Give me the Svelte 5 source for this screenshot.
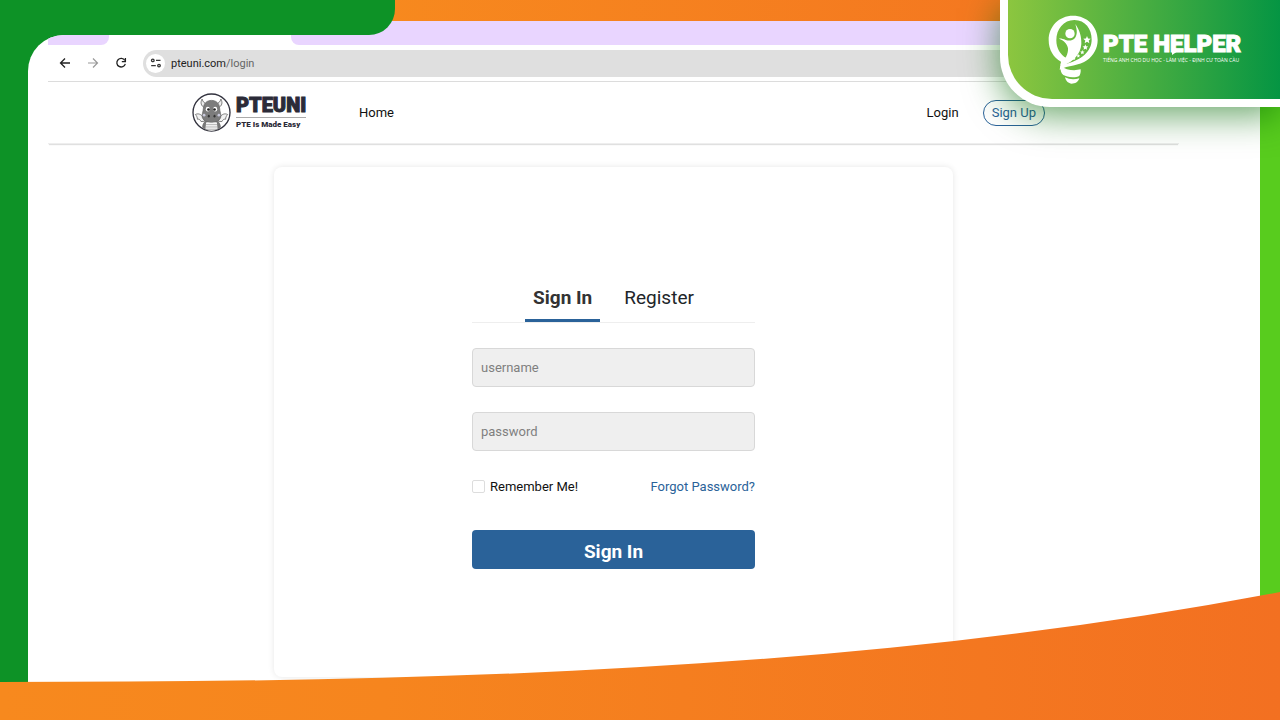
<script lang="ts">
	let username = $state('');
	let password = $state('');
	let remember = $state(false);
	let activeTab = $state('signin');

	const tabs = [
		{ id: 'signin', label: 'Sign In' },
		{ id: 'register', label: 'Register' }
	];

	const stars = [
		{ x: 142, y: 103, r: 12 },
		{ x: 137, y: 125, r: 9 },
		{ x: 128, y: 140, r: 7 },
		{ x: 116, y: 151, r: 6 },
		{ x: 103, y: 159, r: 5 }
	];

	function starPoints(cx: number, cy: number, r: number) {
		const points: string[] = [];
		for (let i = 0; i < 10; i++) {
			const radius = i % 2 === 0 ? r : r * 0.45;
			const angle = (Math.PI / 5) * i - Math.PI / 2;
			points.push(`${cx + radius * Math.cos(angle)},${cy + radius * Math.sin(angle)}`);
		}
		return points.join(' ');
	}
</script>

<div class="poster">
	<div class="top-band">
		<div class="cap"></div>
	</div>

	<div class="window">
		<div class="tab-strip">
			<div class="tab-left"></div>
			<div class="tab-right"></div>
		</div>

		<div class="toolbar">
			<button class="tool" aria-label="Back">
				<svg viewBox="0 0 12 12" width="12" height="12">
					<path d="M11 6H2M6 1.5L1.5 6L6 10.5" fill="none" stroke="#222" stroke-width="1.3" />
				</svg>
			</button>
			<button class="tool" aria-label="Forward">
				<svg viewBox="0 0 12 12" width="12" height="12">
					<path d="M1 6h9M6 1.5L10.5 6L6 10.5" fill="none" stroke="#999" stroke-width="1.2" />
				</svg>
			</button>
			<button class="tool" aria-label="Reload">
				<svg viewBox="0 0 12 12" width="12" height="12">
					<path d="M9.8 3.4A4.3 4.3 0 1 0 10.3 6.8" fill="none" stroke="#222" stroke-width="1.3" />
					<path d="M10.4 1v3.6H6.8" fill="none" stroke="#222" stroke-width="1.3" />
				</svg>
			</button>
			<div class="address">
				<span class="site-info">
					<svg viewBox="0 0 12 12" width="12" height="12" fill="none" stroke="#333" stroke-width="1.3">
						<circle cx="2.8" cy="3.4" r="1.3" />
						<path d="M6 3.4h4.5M1.2 8.6h4.6" />
						<circle cx="9" cy="8.6" r="1.3" />
					</svg>
				</span>
				<span class="url">pteuni.com<span class="path">/login</span></span>
			</div>
		</div>

		<header class="site-nav">
			<a href="#home" class="brand">
				<svg class="mascot" viewBox="0 0 116 116" width="39" height="39">
					<circle cx="58" cy="58" r="55" fill="#fff" stroke="#33333f" stroke-width="4" />
					<g stroke="#666" stroke-width="2.5">
						<path d="M33 72C26 62 18 60 10 64C14 68 16 73 16 78C21 77 25 80 27 85L38 84Z" fill="#f2f2f2" />
						<path d="M83 72C90 62 98 60 106 64C102 68 100 73 100 78C95 77 91 80 89 85L78 84Z" fill="#f2f2f2" />
						<path d="M30 18C24 29 27 38 37 44L44 32C37 31 32 26 30 18Z" fill="#eee" />
						<path d="M86 18C92 29 89 38 79 44L72 32C79 31 84 26 86 18Z" fill="#eee" />
					</g>
					<path d="M30 102C31 86 42 78 58 78S85 86 86 102C78 109 69 113 58 113S38 109 30 102Z" fill="#777" />
					<path d="M42 88Q58 82 74 88L76 106Q58 118 40 106Z" fill="#f4f4f4" />
					<path d="M41 94h34M40 101h36M42 108h32" stroke="#999" stroke-width="2" />
					<path
						d="M58 22C45 22 35 30 34 44C33 50 33 55 31 61C26 77 39 87 58 87S90 77 85 61C83 55 83 50 82 44C81 30 71 22 58 22Z"
						fill="#7c7c7c"
						stroke="#666"
						stroke-width="2"
					/>
					<ellipse cx="47" cy="48" rx="6" ry="7" fill="#fff" />
					<ellipse cx="69" cy="48" rx="6" ry="7" fill="#fff" />
					<circle cx="49" cy="49" r="4" fill="#222" />
					<circle cx="67" cy="49" r="4" fill="#222" />
					<circle cx="36" cy="66" r="4" fill="#c9c9dc" />
					<circle cx="80" cy="66" r="4" fill="#c9c9dc" />
					<ellipse cx="50" cy="69" rx="3" ry="4" fill="#333" />
					<ellipse cx="67" cy="69" rx="3" ry="4" fill="#333" />
				</svg>
				<span class="brand-text">
					<span class="brand-name">PTEUNI</span>
					<span class="brand-tag">PTE Is Made Easy</span>
				</span>
			</a>
			<nav class="links" aria-label="Main">
				<a href="#home">Home</a>
			</nav>
			<div class="account">
				<a href="#login">Login</a>
				<a href="#signup" class="signup">Sign Up</a>
			</div>
		</header>

		<main class="card">
			<form class="login" onsubmit={(e) => e.preventDefault()}>
				<div class="tabs" role="tablist">
					{#each tabs as tab}
						<button
							type="button"
							role="tab"
							class="tab"
							class:active={activeTab === tab.id}
							aria-selected={activeTab === tab.id}
							onclick={() => (activeTab = tab.id)}
						>
							{tab.label}
						</button>
					{/each}
				</div>
				<input class="field" type="text" placeholder="username" aria-label="username" bind:value={username} />
				<input class="field" type="password" placeholder="password" aria-label="password" bind:value={password} />
				<div class="options">
					<label class="remember">
						<input type="checkbox" bind:checked={remember} />
						Remember Me!
					</label>
					<a href="#forgot">Forgot Password?</a>
				</div>
				<button type="submit" class="submit">Sign In</button>
			</form>
		</main>
	</div>

	<svg class="wave" viewBox="0 0 1280 128" preserveAspectRatio="none" aria-hidden="true">
		<defs>
			<linearGradient id="wave-fill">
				<stop offset="0" stop-color="#f7891e" />
				<stop offset="0.3" stop-color="#f6851e" />
				<stop offset="1" stop-color="#f37021" />
			</linearGradient>
		</defs>
		<path d="M0 90C430 90 860 80 1280 0V128H0Z" fill="url(#wave-fill)" />
	</svg>

	<div class="badge">
		<div class="badge-inner">
			<svg class="bulb" viewBox="25 28 150 207" width="50" height="69" fill="#fff">
				<path
					fill-rule="evenodd"
					d="M100 30C58 30 27 62 27 103C27 133 42 156 64 168L60 192C85 178 118 182 143 163C162 149 174 128 174 103C174 62 142 30 100 30ZM104 43C137 43 156 70 156 102C156 136 126 165 72 176C78 168 81 163 80 157C62 148 50 128 50 104C50 70 72 43 104 43Z"
				/>
				<circle cx="91" cy="84" r="14" />
				<path
					d="M107 55C113 75 113 87 106 97C98 106 87 106 78 103C70 100 64 98 58 99C72 104 83 114 85 128C86 145 78 160 64 172C61 180 64 182 72 179C100 168 123 146 125 115C126 92 119 72 107 55Z"
				/>
				{#each stars as star}
					<polygon points={starPoints(star.x, star.y, star.r)} />
				{/each}
				<path d="M62 180C80 194 104 196 123 191V198C122 206 120 212 113 213C96 217 80 213 71 208C64 203 62 194 62 180Z" />
				<path d="M76 215C90 222 104 222 119 218C115 230 106 234 96 234C87 233 79 228 76 215Z" />
			</svg>
			<div class="badge-text">
				<strong>PTE H<span class="bubble">E</span>LPER</strong>
				<small>TIẾNG ANH CHO DU HỌC - LÀM VIỆC - ĐỊNH CƯ TOÀN CẦU</small>
			</div>
		</div>
	</div>
</div>

<style>
	:global(body) {
		margin: 0;
	}

	.poster {
		position: relative;
		min-height: 100vh;
		overflow: hidden;
		background: linear-gradient(to right, #0d9226 50%, #58cc1e 50%);
		font-family: Roboto, sans-serif;
		font-size: 13px;
		color: #111;
	}

	a {
		color: inherit;
		text-decoration: none;
	}

	button {
		font-family: inherit;
		border: 0;
		padding: 0;
		background: none;
		cursor: pointer;
	}

	.top-band {
		height: 35px;
		background:
			linear-gradient(#e9d5ff, #e9d5ff) 0 21px no-repeat,
			linear-gradient(to right, #f7891e 30%, #f37021);
	}

	.cap {
		width: 395px;
		height: 35px;
		background: #0d9226;
		border-bottom-right-radius: 26px;
	}

	.window {
		margin: 0 20px 0 28px;
		padding: 0 81px 43px 20px;
		background: #fff;
		border-top-left-radius: 36px;
		overflow: hidden;
	}

	.tab-strip {
		display: flex;
		gap: 182px;
		height: 10px;
	}

	.tab-left {
		width: 61px;
		background: #e9d5ff;
		border-bottom-right-radius: 8px;
	}

	.tab-right {
		flex: 1;
		background: #e9d5ff;
		border-bottom-left-radius: 8px;
	}

	.toolbar {
		display: flex;
		align-items: center;
		gap: 16px;
		height: 36px;
		padding-left: 11px;
		border-bottom: 1px solid #dcdcdc;
	}

	.tool {
		display: flex;
		width: 12px;
	}

	.address {
		flex: 1;
		display: flex;
		align-items: center;
		gap: 6px;
		height: 27px;
		padding-left: 3px;
		border-radius: 14px;
		background: #dfdfdf;
		font-size: 11px;
		color: #222;
	}

	.site-info {
		display: flex;
		align-items: center;
		justify-content: center;
		width: 19px;
		height: 19px;
		border-radius: 50%;
		background: #fff;
	}

	.path {
		color: #666;
	}

	.site-nav {
		display: flex;
		align-items: center;
		height: 61px;
		padding: 0 134px 0 144px;
		border-bottom: 1px solid #eee;
		box-shadow: 0 2px 1px -1px rgba(0, 0, 0, 0.12);
	}

	.brand {
		display: flex;
		align-items: center;
		gap: 5px;
		width: 167px;
		color: #2b2b38;
	}

	.brand-text {
		display: flex;
		flex-direction: column;
		font-weight: 900;
		white-space: nowrap;
	}

	.brand-name {
		font-size: 20px;
		line-height: 24px;
		border-bottom: 1px solid #aaa;
		-webkit-text-stroke: 1px #2b2b38;
	}

	.brand-tag {
		font-size: 8px;
		line-height: 14px;
	}

	.account {
		display: flex;
		align-items: center;
		gap: 24px;
		margin-left: auto;
	}

	.signup {
		padding: 0 8px;
		border: 1px solid #2a6299;
		border-radius: 13px;
		line-height: 24px;
		color: #2a6299;
	}

	.card {
		display: flex;
		justify-content: center;
		box-sizing: border-box;
		width: 60%;
		min-height: 510px;
		margin: 23px auto 0;
		padding-top: 114px;
		border-radius: 8px;
		box-shadow: 0 0 6px rgba(0, 0, 0, 0.1);
	}

	.login {
		width: 283px;
	}

	.tabs {
		display: flex;
		justify-content: center;
		gap: 16px;
		margin-bottom: 25px;
		border-bottom: 1px solid #eee;
	}

	.tab {
		height: 41px;
		padding: 0 8px 6px;
		border-bottom: 3px solid transparent;
		font-size: 19px;
		color: #212529;
	}

	.tab.active {
		border-bottom-color: #2a6299;
		font-weight: 700;
		color: #333;
	}

	.field {
		display: block;
		box-sizing: border-box;
		width: 100%;
		height: 39px;
		margin-bottom: 25px;
		padding: 0 8px;
		border: 1px solid #d8d8d8;
		border-radius: 4px;
		background: #efefef;
		font: inherit;
	}

	.field::placeholder {
		color: #7f7f7f;
	}

	.options {
		display: flex;
		align-items: center;
		justify-content: space-between;
		height: 20px;
		margin-bottom: 34px;
	}

	.options a {
		color: #2a6299;
	}

	.remember {
		display: flex;
		align-items: center;
		gap: 5px;
	}

	.remember input {
		appearance: none;
		width: 13px;
		height: 13px;
		margin: 0;
		border: 1px solid #ddd;
		border-radius: 2px;
	}

	.remember input:checked {
		background: #2a6299;
	}

	.submit {
		width: 100%;
		height: 39px;
		padding-top: 4px;
		border-radius: 4px;
		background: #2a6299;
		font-size: 19px;
		font-weight: 700;
		color: #fff;
	}

	/* decoration laid over the window */
	.wave {
		position: absolute;
		left: 0;
		bottom: 0;
		width: 100%;
		height: 128px;
	}

	.badge {
		position: absolute;
		top: 0;
		right: 0;
		padding: 0 0 8px 8px;
		background: #fff;
		border-bottom-left-radius: 50px;
		box-shadow: 0 8px 36px rgba(0, 105, 0, 0.6);
	}

	.badge-inner {
		display: flex;
		align-items: center;
		gap: 5px;
		box-sizing: border-box;
		width: 272px;
		height: 99px;
		padding-left: 40px;
		background: linear-gradient(to right, #8cc63f, #059543);
		border-bottom-left-radius: 44px;
		color: #fff;
	}

	.badge-text {
		display: flex;
		flex-direction: column;
		padding-bottom: 4px;
		white-space: nowrap;
	}

	.badge-text strong {
		font-size: 24px;
		font-weight: 900;
		line-height: 24px;
		-webkit-text-stroke: 1px #fff;
	}

	.badge-text small {
		font-family: 'Open Sans', sans-serif;
		font-size: 5px;
		line-height: 8px;
	}

	/* the E doubles as a speech bubble */
	.bubble {
		position: relative;
	}

	.bubble::after {
		content: '';
		position: absolute;
		left: 2px;
		bottom: 3px;
		border-top: 4px solid #fff;
		border-right: 6px solid transparent;
	}
</style>
